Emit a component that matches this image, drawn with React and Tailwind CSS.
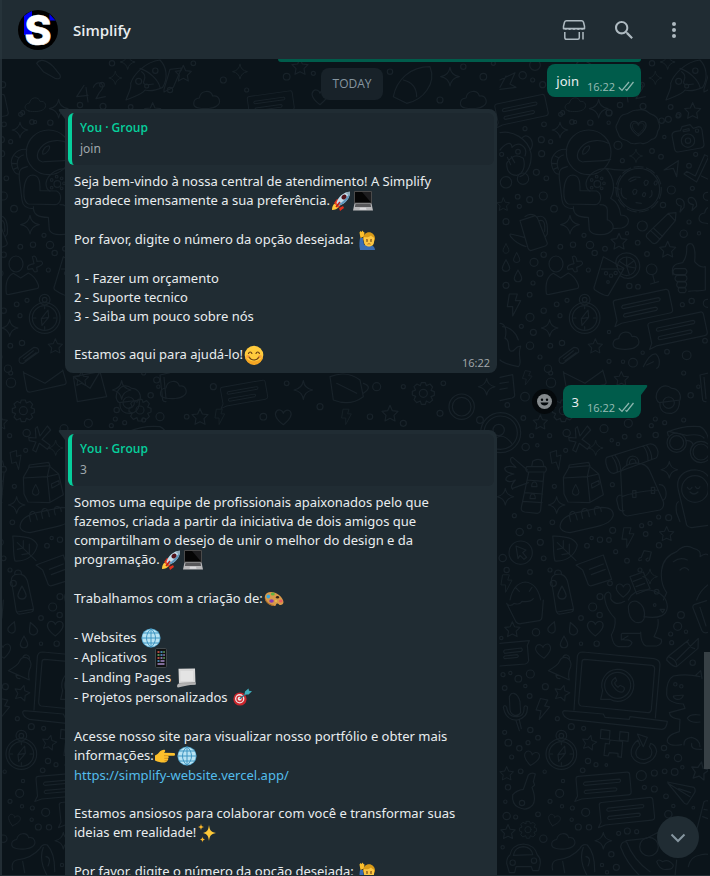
import React from "react";

/* ---------- Emoji drawings ---------- */

function Emoji({ label, children }) {
  return (
    <svg role="img" aria-label={label} viewBox="0 0 20 20" className="mx-px size-5 shrink-0">
      {children}
    </svg>
  );
}

const Rocket = () => (
  <Emoji label="rocket">
    <path d="M1 19c0-3 1-5.500 3-6.500l3.500 3.500c-1 2-3.500 3-6.500 3z" fill="#ffc83d" />
    <path d="M3 12l3-4 3 1-3 5zM8 17l4-2 1 2-4 3z" fill="#e0301e" />
    <path d="M4 13l2-3 4 4-3 3-1-2z" fill="#f4511e" />
    <path d="M5.500 12C7 6 12 1 19 .7 19.300 7 14 13 8 14.500z" fill="#c3dcea" />
    <path d="M7 13.500C12 11 16 7 19 .7 19.300 7 14 13 8 14.500z" fill="#5d94bb" />
    <path d="M14.500 1.800C16 1 17.500.7 19 .7c.1 1.500-.2 3-.8 4.300z" fill="#8fa8b8" />
    <ellipse cx="13" cy="6" rx="2.800" ry="2.200" transform="rotate(-40 13 6)" fill="#52121a" />
    <path d="M5 16l4-5" stroke="#b71c1c" strokeWidth="1.500" />
  </Emoji>
);

const Laptop = () => (
  <Emoji label="laptop">
    <rect x="1" y="0" width="18" height="13" rx="1" fill="#4a4a4a" />
    <rect x="2" y="1" width="16" height="10.500" fill="#050505" />
    <path d="M9 1h9v10.500z" fill="#1d1d1f" />
    <path d="M1.500 12.500h17L20 19.500H0z" fill="#b9b9bb" />
    <path d="M2.500 13h15l.7 3H1.800z" fill="#58585a" />
    <path d="M7 16.800h6l.5 2h-7z" fill="#dadadc" />
  </Emoji>
);

const RaisedHand = () => (
  <Emoji label="man raising hand">
    <path d="M2 20c-1-5-.5-9 0-12h3l1 7c6-1 11 0 11 5z" fill="#3a6db3" />
    <path d="M1.500 2.500l1-1.500 1 1 1-1.500 1 1.500 1 .5-.5 4-3.500 1.500z" fill="#fbbf2d" />
    <path d="M5 9c0-9 12-9 12 0l-1 3H6z" fill="#d89a18" />
    <path d="M6 7c3 1 6-.5 7-1.500 1 1.500 3 1.500 3 2.500v4c0 6-10 6-10 0z" fill="#fdc742" />
    <path d="M8 9.500l2 .3M12 9.800l2-.3" stroke="#8a5515" strokeWidth=".8" />
    <circle cx="9" cy="11" r=".8" fill="#4e2d10" />
    <circle cx="13" cy="11" r=".8" fill="#4e2d10" />
    <path d="M9.500 14.200c1-.6 2-.6 3 0" stroke="#a45b17" strokeWidth=".9" fill="none" />
  </Emoji>
);

const Smile = () => (
  <Emoji label="smiling face">
    <circle cx="10" cy="10" r="9.300" fill="#ffcb3d" />
    <path d="M1 11a9 9 0 0 0 18 0c-3 7-15 7-18 0z" fill="#f5a623" />
    <path d="M4.500 8.500c.8-2 2.700-2 3.400 0M12 8.500c.8-2 2.700-2 3.400 0M5 12c2.500 4 7.500 4 10 0" stroke="#6b3f13" strokeWidth="1.200" fill="none" strokeLinecap="round" />
    <circle cx="4" cy="11.500" r="1.800" fill="#f5803a" opacity=".5" />
    <circle cx="16" cy="11.500" r="1.800" fill="#f5803a" opacity=".5" />
  </Emoji>
);

const Palette = () => (
  <Emoji label="artist palette">
    <path d="M1 7C2 2 10 2 15 6c5 4 6 9 2 10-2 .5-2.500-2-4-1.500s-.5 3-3 2.500C4 16 0 12 1 7z" fill="#d99a4a" />
    <path d="M1 8c1 5 5 7.500 9 8l.5 1C4 16.500 0 12 1 8z" fill="#a66a28" />
    <ellipse cx="4.300" cy="7.500" rx="1.800" ry="2.100" fill="#39a6df" />
    <ellipse cx="8.800" cy="5" rx="2" ry="1.500" fill="#62b33f" />
    <ellipse cx="13.500" cy="8.300" rx="1.600" ry="1.300" fill="#352317" />
    <ellipse cx="16.800" cy="12" rx="1.800" ry="1.600" fill="#e9605c" />
    <ellipse cx="7.500" cy="12" rx="2.300" ry="1.700" fill="#893baf" />
    <ellipse cx="12" cy="12" rx="1" ry=".8" fill="#f1d04c" />
  </Emoji>
);

const Globe = () => (
  <Emoji label="globe">
    <circle cx="10" cy="10" r="9.600" fill="#4a9cc4" />
    <circle cx="10" cy="10" r="8.800" fill="#b8e3f3" />
    <path d="M10 .8v18.400M.8 10h18.400M2.600 5h14.800M2.600 15h14.800M10 .8c-6 5-6 13.400 0 18.400M10 .8c6 5 6 13.400 0 18.400" stroke="#3f96c2" strokeWidth="1" fill="none" />
  </Emoji>
);

const Phone = () => (
  <Emoji label="mobile phone">
    <rect x="4.500" y=".5" width="11" height="19" rx="1.200" fill="#101112" stroke="#4b5357" strokeWidth=".8" />
    <path d="M6.500 4h2M6.500 10h2" stroke="#e35d50" strokeWidth="1.300" />
    <path d="M9.500 4h2M9.500 7h2M6.500 13h2" stroke="#56a7db" strokeWidth="1.300" />
    <path d="M12.300 4h1.500M6.500 7h2M12.300 10h1.500" stroke="#6cba6a" strokeWidth="1.300" />
    <path d="M12.300 7h1.500M9.500 10h2M9.500 13h4M6.500 16h7" stroke="#a48cc8" strokeWidth="1.300" />
  </Emoji>
);

const Page = () => (
  <Emoji label="page with curl">
    <path d="M2.500.8L19 .5l.5 16-16.500.5z" fill="#d8d8d8" />
    <path d="M4.500 3h12.500v10H4.500z" fill="#e4e4e4" />
    <path d="M3 15.500l16.500-1 .2 2C15 16.500 8 18 2 19.500c-1.500-.5-1-3.500 1-4z" fill="#b3b3b3" />
    <path d="M3 15.500c6-1 10-.5 16-1" stroke="#8f8f8f" strokeWidth=".7" fill="none" />
  </Emoji>
);

const Target = () => (
  <Emoji label="bullseye">
    <circle cx="8" cy="11" r="6.600" fill="#c9252c" />
    <circle cx="7.700" cy="10.800" r="4.700" fill="#f0e4e4" />
    <circle cx="7.700" cy="10.800" r="3.400" fill="#cf2c33" />
    <circle cx="7.700" cy="10.800" r="2" fill="#f5eaea" />
    <path d="M7.700 10.800L15 5" stroke="#2c6e80" strokeWidth="1.300" />
    <path d="M12.500 6.500l.5-3L16.500.500l.5 2.300 3 .4-3.500 3.400z" fill="#40aebd" />
  </Emoji>
);

const Pointing = () => (
  <Emoji label="pointing right">
    <path d="M0 9.500c1-1 2.500-1 4-3s3.500-3 5.500-2.800c1.200.4.800 2-.5 3l10 .2c1.500.2 1.500 2.600 0 2.800H13c1 1 .8 2.300 0 2.700.5 1 .2 2-.7 2.400C12 17 6 17.500 0 14.500z" fill="#fcc02c" />
    <path d="M13 9.700H9M13 12.300H9.300M12.300 14.700H9.500" stroke="#c9851b" strokeWidth=".8" />
  </Emoji>
);

const Sparkles = () => (
  <Emoji label="sparkles">
    <path d="M12 2c.8 5.500 1.500 6.500 7 8-5.500 1.500-6.200 2.500-7 8-.8-5.500-1.500-6.500-6-8 4.500-1.500 5.200-2.500 6-8z" fill="#fdc838" />
    <path d="M4 .5c.3 2.500.7 3 3 3.500-2.300.5-2.700 1-3 3.500-.3-2.500-.7-3-3-3.500 2.300-.5 2.700-1 3-3.500zM5.500 13.500c.3 2 .6 2.400 2.500 3-1.900.5-2.200 1-2.500 3-.3-2-.6-2.500-2.500-3 1.900-.6 2.200-1 2.500-3z" fill="#f8b62a" />
  </Emoji>
);

/* ---------- Wallpaper doodles ---------- */

const at = (x, y, s = 1, r = 0) => `translate(${x} ${y}) rotate(${r}) scale(${s})`;
const Star = ({ x, y, s, r }) => (
  <path transform={at(x, y, s, r)} d="M0-24L7-8 24-6 12 6 15 23 0 15-15 23-12 6-24-6-7-8z" />
);
const Spark = ({ x, y, s, r }) => (
  <path transform={at(x, y, s, r)} d="M0-28Q3-4 28 0 4 4 0 28-4 4-28 0-4-4 0-28z" />
);
const Heart = ({ x, y, s, r }) => (
  <path transform={at(x, y, s, r)} d="M0 24C-24 6-28-8-20-17-12-24-2-18 0-10 2-18 14-24 21-16 28-6 20 8 0 24z" />
);
const Bolt = ({ x, y, s, r }) => (
  <path transform={at(x, y, s, r)} d="M-14-32L10-32 4-12 20-12-4 34-4 6-20 6z" />
);
const Drop = ({ x, y, s, r }) => (
  <path transform={at(x, y, s, r)} d="M0-18C6-6 12 2 11 9 8 20-8 20-11 9-12 2-6-6 0-18z" />
);
const Cloud = ({ x, y, s, r }) => (
  <path transform={at(x, y, s, r)} d="M-24 24C-46 20-42-4-22-6-18-30 12-32 18-12 38-16 46 8 30 18 20 26-6 28-24 24z" />
);
const Chat = ({ x, y, s, r }) => (
  <g transform={at(x, y, s, r)}>
    <path d="M-74-36H80Q88-36 88-28V26Q88 36 78 36H-70L-92 42-82 26V-28Q-82-36-74-36z" />
    <path d="M-56-16H54Q62-12 54-6H-56Q-64-10-56-16zM-56 10H40Q48 14 40 20H-56Q-64 16-56 10z" />
  </g>
);
const Compass = ({ x, y }) => (
  <g transform={at(x, y)}>
    <circle r="46" />
    <circle r="37" />
    <circle cy="-55" r="16" />
    <circle cy="-55" r="7" />
    <path d="M10-24L-10 2-8 22 12-2zM-10 2L12-2M-34 0h8M26 0h8M0 26v8M0-34v6" />
  </g>
);
const Cog = ({ x, y, s }) => (
  <g transform={at(x, y, s)}>
    <circle r="12" />
    <path d="M-6-32H6L9-23 20-28 28-19 23-9 33-5V6L23 10 28 20 19 28 9 23 6 33H-6L-9 23-20 28-28 19-23 9-33 5V-6L-23-10-28-20-19-28-9-23z" />
  </g>
);
const Dots = ({ points }) => points.map(([x, y, r]) => <circle key={`${x}-${y}`} cx={x} cy={y} r={r} />);

function Doodles() {
  return (
    <g id="doodles" fill="none" stroke="#182229" strokeWidth="3.600" strokeLinejoin="round" strokeLinecap="round">
      <g transform="translate(500 0) scale(.33333)">
        <path d="M0 240L45 218 30 252 48 262 0 268M18 228L0 262" />
        <Chat x={62} y={330} s={0.9} r={-12} />
        <Cloud x={226} y={314} s={0.8} />
        <Spark x={296} y={326} />
        <Spark x={466} y={234} s={0.7} />
        <Spark x={503} y={186} s={0.8} />
        <Star x={578} y={332} />
        <path d="M498 300C505 280 516 262 512 250 520 225 555 185 600 180 620 200 625 235 608 262 590 270 570 275 555 270 545 285 520 290 498 300zM540 205C570 215 595 240 600 262M545 215Q560 225 552 242T580 252" />
        <path d="M612 268L630 208 665 204 640 262 612 276z" />
        <path d="M372 256L350 290 384 286M378 262L384 306M400 262Q408 244 424 250 434 262 418 278L408 296 436 290" />
        <path d="M230 190C240 175 260 180 280 200L300 225Q305 240 285 235L250 215z" />
        <Dots points={[[68,226,11],[98,240,6],[128,254,9],[105,195,16],[188,338,6],[216,366,7],[327,339,9],[360,315,8],[429,319,9],[426,254,7],[456,190,8],[512,321,7],[536,244,9],[560,258,6],[586,212,8],[536,345,7],[485,362,8]]} />
      </g>
      <g transform="translate(500 100) scale(.33333)">
        <circle cx="266" cy="157" r="67" />
        <path d="M325 130C305 118 270 118 250 135 228 155 225 180 248 186 275 182 305 185 332 178M248 162C245 150 258 136 268 138 272 145 258 165 248 162z" />
        <path d="M200 148C165 145 150 175 155 195 158 215 170 225 178 222M190 165C170 170 168 195 175 208M165 168l12 6M156 190l13 1M160 208l12-5" />
        <path d="M202 200C180 205 176 210 178 235L186 300C188 318 200 326 220 326M192 290C190 260 195 226 218 225 240 226 240 250 240 272L290 273C308 282 305 312 285 314L205 312Q195 308 192 290z" />
        <path d="M220 320C220 345 235 352 265 352L268 390C275 408 325 410 338 388 345 372 325 358 322 360V330C322 318 310 314 300 314M320 208C345 235 345 270 332 295 350 305 360 325 362 345 395 345 390 380 365 384L340 386" />
        <circle cx="292" cy="252" r="10" />
        <path d="M325 208C300 200 262 220 258 250 258 265 262 270 270 274M318 205Q350 212 385 210M345 262L358 268" />
        <circle cx="416" cy="268" r="63" />
        <circle cx="416" cy="268" r="68" strokeDasharray="28 10" />
        <path d="M386 240C396 230 405 230 420 232M390 245l18-8M432 248q4-12 13-4-2 14-10 12zM398 275q4-12 13-4-2 14-10 12zM427 285q4-12 10-4-2 12-8 8zM462 250q4-12 10-4-2 12-8 8zM364 265q-4 28 16 32M455 272q4 16-6 20M408 308l16 2" />
        <Dots points={[[275,240,4],[290,230,4],[305,235,4],[312,250,4],[305,265,4],[275,263,4]]} />
        <path d="M352 70C340 85 355 95 356 105 362 122 378 118 384 124 400 140 415 125 425 130 440 136 450 120 455 118 475 115 470 98 474 92 486 78 474 70 474 60 468 42 452 45 446 38 430 22 415 32 410 30 392 30 385 42 378 42 358 44 358 60 352 70z" />
        <Heart x={415} y={84} />
        <Heart x={415} y={84} s={0.75} />
        <path d="M524 95L541 92 546 80 570 74 580 85 596 80Q604 80 606 90L612 134Q612 142 602 144L534 156Q526 156 524 148L516 106Q516 98 524 95zM549 90l18-4 1 6-18 3z" />
        <circle cx="564" cy="122" r="20" />
        <circle cx="564" cy="122" r="8" />
        <circle cx="591" cy="92" r="5" />
        <path d="M492 210L535 182 530 230 520 205zM552 222L590 246 626 170 614 164 586 228 560 214zM604 228L630 240" />
        <path d="M0 98C35 90 85 115 93 160 96 190 85 220 60 230M68 112C80 100 98 115 97 135 95 148 90 150 88 150M0 150C25 120 35 130 36 142 55 120 85 140 75 168M20 190C20 215 30 226 50 226 68 222 78 200 70 175Q40 155 20 190zM22 172l10 22M34 170l10 18" />
        <circle cx="54" cy="155" r="7" />
        <circle cx="5" cy="163" r="6" />
        <circle cx="18" cy="247" r="17" />
        <circle cx="69" cy="236" r="17" />
        <path d="M60 362L106 347Q112 350 115 360L142 430Q142 436 136 438L92 452Q86 450 84 444zM75 350Q88 338 104 346M72 412L58 408 32 402Q28 402 32 410 50 432 78 440M110 352C130 342 145 355 142 402L136 410M118 362C130 358 136 366 134 394" />
        <path d="M445 398L505 340 528 338 526 362 472 426Q465 434 456 428L440 412Q436 404 445 398zM452 392l28 26M460 384l28 26M505 340l20 22" />
        <path d="M310 470L372 505 325 586Q315 590 285 570 280 565 283 560zM304 507H370M350 500C340 470 365 455 390 460 420 470 428 505 408 525 395 538 375 538 362 528" />
        <circle cx="380" cy="499" r="28" />
        <path d="M380 499V472M380 499L402 482M380 499L406 504M380 499L388 524M380 499L358 484" />
        <Dots points={[[318,520,5],[333,527,5],[347,519,5],[324,546,4]]} />
        <ellipse cx="168" cy="492" rx="21" ry="24" />
        <path d="M160 520C140 530 136 555 139 580Q140 585 148 583L230 566Q238 564 235 555 225 528 205 519L182 534z" />
        <path d="M217 470q12-6 14 14l12-1q12 8-5 16l-8 3 2 12q-10 6-14-8l-14 2q-6-10 9-15l9-2z" />
        <circle cx="455" cy="508" r="16" />
        <path d="M458 524L464 548M452 552L476 545" />
        <path d="M519 525Q512 500 530 492L548 488Q562 470 560 440 564 428 576 432 588 445 584 485 600 505 616 500V570C600 575 580 570 566 574M526 506h30q10 8 0 18h-32q-10-8 0-18zM528 526h28q10 8 0 18h-26q-10-8 0-18zM532 546h24q8 6 0 16h-22q-8-6 0-16zM536 564h20q6 8-2 14h-14q-8-6-4-14z" />
        <Compass x={254} y={654} />
        <Chat x={426} y={620} r={-12} />
        <Chat x={530} y={688} r={-12} />
        <Cloud x={378} y={722} />
        <path d="M178 775L222 742Q238 742 236 756L190 790Q174 792 178 775zM190 776L220 752M195 782L228 758" />
        <path d="M0 670C15 670 22 690 15 715 32 720 20 740 30 752 45 760 40 740 62 738 50 770 70 790 55 800 30 795 10 790 0 780M8 680C30 680 50 700 55 720" />
        <path d="M430 800C440 780 455 760 468 762 482 775 480 800 470 805M440 795l20-10" />
        <path d="M530 310Q525 295 540 296 556 300 552 322L540 336 544 318Q534 318 530 310zM565 305Q562 292 576 292 590 298 590 318L576 332 580 314Q570 314 565 305z" />
        <Spark x={180} y={90} s={0.85} />
        <Spark x={408} y={168} s={0.7} />
        <Spark x={210} y={374} />
        <Spark x={149} y={684} s={0.9} />
        <Star x={10} y={313} s={0.8} />
        <Star x={357} y={424} />
        <Star x={503} y={448} />
        <Star x={286} y={738} s={0.9} />
        <Bolt x={42} y={614} />
        <Drop x={18} y={446} s={0.8} />
        <Drop x={18} y={497} />
        <Drop x={50} y={473} s={0.85} />
        <Drop x={54} y={528} />
        <Cloud x={636} y={345} />
        <Dots points={[[75,86,6],[124,119,9],[152,125,6],[125,161,9],[132,73,7],[182,43,6],[225,66,5],[271,68,8],[327,38,9],[326,68,5],[109,217,9],[139,235,7],[354,136,12],[367,182,6],[456,153,7],[483,170,7],[493,111,5],[505,58,9],[534,48,6],[587,163,6],[567,197,7],[514,270,12],[577,265,6],[622,289,12],[489,315,8],[53,290,7],[89,299,9],[58,319,6],[130,288,12],[162,326,10],[18,365,9],[252,406,6],[427,378,15],[381,400,5],[413,428,7],[551,401,11],[597,400,5],[567,366,6],[181,440,7],[219,434,8],[270,435,11],[315,446,7],[284,459,8],[441,462,7],[131,464,8],[102,487,12],[120,520,9],[99,549,6],[18,556,9],[89,584,7],[265,510,6],[388,558,8],[414,560,7],[170,613,7],[201,601,6],[131,632,8],[180,647,6],[90,652,12],[64,679,6],[100,697,9],[90,737,11],[151,737,7],[186,729,8],[120,771,6],[575,603,8],[547,614,6],[622,610,12],[327,696,5],[428,758,5],[501,755,7],[560,766,13],[399,788,13],[369,785,5],[327,784,6],[615,722,7],[144,806,11]]} />
      </g>
      <g transform="translate(500 370) scale(.33333)">
        <path d="M0 22L38 14 44 76Q44 82 36 84L0 92M0 40L26 36M0 58L22 54" />
        <Bolt x={82} y={24} s={0.65} r={10} />
        <path d="M190 5L200 60Q202 68 212 66L312 44Q320 42 318 34L308 0M192 8L255 40 308 2" />
        <Star x={364} y={26} s={0.9} />
        <path d="M470 70C480 45 500 42 515 55 535 55 545 75 540 90L478 98Q465 90 470 70zM480 98C478 125 495 132 515 130 535 125 540 105 538 92" />
        <circle cx="506" cy="98" r="17" />
        <path d="M600 15L630 8M600 15L608 90Q610 96 618 95M612 22L618 86" />
        <circle cx="2" cy="188" r="60" />
        <circle cx="2" cy="188" r="50" />
        <circle cx="-4" cy="180" r="17" />
        <path d="M-30 225Q0 175 35 220" />
        <Star x={121} y={156} s={0.9} />
        <Cog x={190} y={122} />
        <path d="M232 170L240 198 262 168 272 180 246 208 270 226 262 238 238 220 228 246 218 240 228 216 208 212 206 202 228 204 226 176z" />
        <Spark x={287} y={234} s={0.8} />
        <Bolt x={170} y={270} s={0.85} r={-18} />
        <circle cx="530" cy="218" r="29" />
        <circle cx="530" cy="218" r="21" />
        <circle cx="603" cy="246" r="32" />
        <circle cx="603" cy="246" r="24" />
        <path d="M558 212Q575 210 580 225M505 198L502 186Q550 165 600 170 618 178 625 205M505 184L560 196Q600 190 612 204" />
        <path d="M85 338L36 356M82 300L38 262Q28 262 34 278L48 292Q20 285 14 295 16 308 42 312 15 318 18 330 28 340 46 330 28 350 38 358" />
        <path d="M95 290L98 274Q115 262 128 274L132 290M80 290H136Q142 298 136 306H82Q74 298 80 290zM86 308L64 412Q62 424 74 426L112 430Q120 430 122 420L132 308M82 330L130 334M74 368L128 372M68 394L126 398M95 350q0-14 8-14t8 14zM90 386q0-14 8-14t8 14z" />
        <path d="M208 285L266 277 270 287 206 292zM206 294L190 322 192 372 204 396 268 398 310 374 296 312 270 290M190 324L262 320 270 396M262 320L296 312M262 320L268 292M274 342l22-10 2 10-22 12z" />
        <Drop x={227} y={360} s={0.9} />
        <path d="M320 262L448 222Q468 220 474 245 474 260 468 264L342 310Q325 312 318 280 316 266 320 262zM335 258Q352 280 352 305M345 256Q362 276 362 302M430 228Q445 248 444 272M440 226Q456 246 455 268" />
        <path d="M362 305Q370 285 400 280 435 275 448 300L490 395Q494 412 480 420L382 438Q370 436 368 425zM366 380Q400 365 475 360M380 285Q380 260 398 258 418 260 416 282M388 283Q388 268 398 267 408 268 408 280M398 362h10v20h-10zM454 352h10v18h-10zM364 375Q350 375 350 390L356 415Q360 425 372 422M478 344Q494 342 498 365 500 385 490 390" />
        <Spark x={508} y={299} s={0.9} />
        <Spark x={170} y={405} s={0.9} />
        <Spark x={16} y={380} s={0.9} />
        <path d="M535 360C525 320 555 298 590 300 630 305 640 340 632 370M535 360L560 465Q566 475 580 472L630 465M535 395Q525 400 530 430L540 455M562 352q8 12 14 0M586 350q8 12 14 0M570 366q12 12 24 0" />
        <circle cx="585" cy="357" r="40" />
        <path d="M180 470Q182 440 230 428L305 412Q340 412 340 435 335 460 290 470L210 488Q182 486 180 470zM212 455Q204 430 215 425T232 450M248 445Q240 420 252 416T268 440M286 435Q278 412 290 410T304 424" />
        <path d="M158 498C190 500 222 500 232 525 228 550 205 575 165 573 158 550 162 520 158 498zM172 518L228 572M190 512V534L172 538M208 522V550L186 554" />
        <circle cx="62" cy="548" r="35" />
        <path d="M48 528L78 540 68 548 80 562 72 568 60 556 54 566z" />
        <Bolt x={384} y={502} s={0.9} />
        <Star x={500} y={491} s={0.9} />
        <path d="M425 570Q412 576 418 564L424 562 432 542 454 546 448 570Q440 578 438 568L444 564" />
        <path d="M485 600Q490 560 530 545 555 520 580 535 605 540 600 560 620 545 630 560M520 575Q540 560 562 570" />
        <path d="M485 600Q480 640 500 668L490 690M630 640Q600 660 590 690M540 600q14-14 26 0" />
        <path d="M390 620l40-14 20 50-40 16zM400 634l26-10M408 650l26-10" />
        <Heart x={370} y={660} s={0.9} />
        <Spark x={450} y={620} s={0.8} />
        <Bolt x={20} y={640} s={0.8} />
        <path d="M30 690Q40 640 76 636 112 640 122 690M48 654l10 10M96 652l-8 12" />
        <Dots points={[[20,600,8],[90,606,7],[160,640,9],[300,680,9],[330,640,7],[420,600,6],[470,665,7],[150,600,6]]} />
        <Dots points={[[153,38,14],[75,80,13],[22,105,7],[152,9,6],[70,144,7],[95,197,6],[149,197,6],[77,231,11],[112,226,5],[200,189,11],[312,176,12],[374,200,7],[417,197,6],[335,211,5],[354,222,5],[454,167,6],[466,147,6],[494,158,6],[467,195,8],[551,9,6],[595,50,5],[551,150,6],[572,76,8],[197,241,6],[163,349,6],[337,344,6],[43,437,6],[88,470,6],[59,486,11],[157,457,7],[118,477,5],[121,517,9],[131,565,7],[261,527,7],[275,504,5],[300,509,8],[327,510,7],[338,481,9],[347,545,6],[476,441,6],[506,443,9],[450,460,6],[425,467,6],[437,492,7],[477,526,8],[381,572,7],[8,564,11],[385,160,12]]} />
      </g>
      <g transform="translate(540 370) scale(.33333)">
        <path d="M44 612Q44 600 55 600 66 602 64 614M44 614L64 612M42 616Q30 622 36 642L48 720Q50 734 62 732L94 726Q102 724 100 714L84 640Q80 620 66 614M52 726L98 718" />
        <Drop x={66} y={668} s={1.1} />
        <path d="M108 585L190 555L215 628L158 646Q150 650 145 644L128 600zM148 598L190 582M154 614L196 598" />
      </g>
      <g transform="translate(500 600) scale(.33333)">
        <path d="M20 10L48 66Q56 74 66 70L118 62Q126 58 126 50L130 0M22 14Q35 20 42 10 60 16 66 4 90 8 100-4" />
        <path d="M315 0Q320 30 345 55 348 80 334 105 340 140 355 140H378Q390 142 396 128 390 118 376 120L364 118M366 100H420M364 102V120L384 108M385 20Q390 0 410 4 440 20 432 56 425 72 405 66 385 55 385 20zM432 50Q500 60 502 20 500-20 450-30 400-34 385 0M474 58Q478 80 462 110L484 118Q488 132 470 138H438Q422 130 422 96M315 0Q310-20 325-24 335-20 332-4 345 20 374 4M480 28h14l-6 10z" />
        <circle cx="464" cy="15" r="4" />
        <path d="M582 14L620 2M582 14Q576 18 580 26L606 92Q610 100 620 98L630 96M600 22L618 78" />
        <Star x={37} y={88} s={0.95} />
        <Drop x={157} y={82} r={20} />
        <Drop x={218} y={86} r={-20} s={1.1} />
        <Drop x={192} y={126} />
        <Heart x={286} y={84} />
        <Heart x={130} y={152} r={-5} s={0.95} />
        <path d="M0 130L88 122 82 136 86 182Q84 190 76 192L0 198M14 150L64 144Q70 150 64 154L14 160Q8 154 14 150zM14 168L52 164Q58 168 52 172L14 176Q8 172 14 168z" />
        <path d="M145 212Q175 195 178 185 185 168 202 174 216 182 212 200 202 220 208 240zM188 174Q190 164 200 165 210 168 208 178M168 224Q168 236 180 236" />
        <Star x={186} y={278} s={0.95} r={15} />
        <path d="M222 330L232 170Q234 156 248 156L462 176Q480 180 480 194L466 354M236 305L246 186Q246 178 254 178L456 196Q464 198 464 206L454 330Q452 338 444 338L244 318Q236 316 236 305zM192 332L310 342 315 352 388 358 390 350 502 364Q500 386 486 388L208 358Q188 350 188 336z" />
        <circle cx="353" cy="256" r="39" />
        <path d="M308 272A48 48 0 1 1 330 298L302 298z" />
        <path d="M338 240Q330 250 342 262 354 278 368 276 376 268 372 262L360 256 354 262Q344 254 344 248L350 242 346 232z" />
        <path d="M530 180L595 115 594 145 530 200Q520 202 500 180 500 174 506 168L566 120M562 124Q568 142 584 146M506 170Q530 180 530 196" />
        <path d="M600 230Q560 220 520 228 498 240 500 285 505 310 550 312L555 325Q530 332 508 338 510 355 540 358L538 395Q500 405 502 425 510 440 545 434M520 288Q540 285 550 286 545 300 530 298 520 295 520 288zM600 345Q570 340 562 355 570 370 600 366M552 435Q550 415 575 412 600 418 600 440M575 430Q570 450 605 448M588 225L602 212 606 235" />
        <circle cx="526" cy="253" r="5" />
        <circle cx="544" cy="259" r="5" />
        <path d="M28 290Q32 278 42 280 55 284 60 305L62 338Q56 348 44 346 32 342 30 330zM10 322Q18 362 52 360 85 352 82 320 75 314 72 322 74 348 52 350 24 352 20 322 14 312 10 322zM48 362L58 392M58 360L64 386" />
        <Bolt x={128} y={328} r={12} s={0.95} />
        <Compass x={184} y={462} />
        <Star x={268} y={427} s={0.9} r={12} />
        <path d="M303 388L330 392 328 418 301 415zM360 395L386 398 384 424 358 420zM330 420L368 424 364 472 354 470 354 460 328 458 324 468 312 466 316 430 328 432z" />
        <path d="M412 402L442 412 430 440 412 402zM414 420Q388 440 395 468 408 492 435 490 465 482 470 455 468 435 452 430L448 440Q462 455 450 472 430 486 412 472 400 455 420 436z" />
        <Heart x={95} y={474} r={10} s={0.95} />
        <Star x={20} y={520} s={0.85} />
        <Star x={600} y={512} s={1.1} r={10} />
        <Chat x={308} y={557} s={0.95} r={-5} />
        <Chat x={378} y={634} s={0.95} r={-6} />
        <path d="M85 525Q95 515 106 522L100 545 104 555 96 562 100 574Q108 600 98 615 80 635 55 622 35 612 38 585 50 570 70 568z" />
        <circle cx="66" cy="609" r="8" />
        <path d="M502 546L582 562Q588 568 584 578L562 612Q555 614 550 606L504 550 570 590M536 566l36 12" />
        <Heart x={162} y={660} s={0.75} r={15} />
        <Star x={24} y={695} s={0.9} />
        <Cog x={84} y={689} s={0.78} />
        <Cloud x={190} y={724} s={0.9} />
        <Spark x={310} y={722} s={0.9} />
        <path d="M30 765Q35 735 70 732 105 735 112 765 124 775 120 795L116 812H98L94 800H48L44 818H28L20 790Q20 772 30 765zM40 766Q44 742 70 740 95 742 98 764z" />
        <circle cx="38" cy="788" r="8" />
        <circle cx="102" cy="782" r="8" />
        <path d="M158 810Q152 785 170 780 215 775 240 745 248 730 262 735 285 760 284 815M188 784L194 818M250 742Q235 780 262 828M258 770Q275 772 264 798" />
        <path d="M362 740Q365 722 380 726 400 780 450 815M378 722L440 715 478 695M362 742Q380 790 420 828M470 785Q475 775 488 785 505 775 520 795 520 810 500 808 480 812 470 785zM530 780L525 828M565 800Q570 770 600 765 620 760 630 765" />
        <circle cx="447" cy="740" r="28" />
        <path d="M590 690L612 605Q618 600 630 604M608 650L624 656M612 628L622 630" />
        <Dots points={[[243,54,7],[278,21,12],[299,45,8],[243,131,5],[290,131,8],[108,97,11],[4,114,5],[543,45,10],[533,79,12],[512,102,6],[558,95,5],[515,128,6],[578,188,8],[9,224,6],[31,219,5],[55,236,10],[91,222,12],[76,258,5],[14,264,7],[136,260,9],[89,288,7],[172,356,6],[214,380,9],[251,385,6],[14,397,6],[91,390,8],[25,428,10],[84,428,6],[58,445,8],[35,471,6],[114,413,7],[264,483,8],[288,494,6],[319,495,4],[134,515,5],[62,514,7],[248,511,7],[424,527,15],[463,519,9],[494,514,7],[524,516,10],[492,444,8],[534,474,11],[502,469,5],[547,502,5],[24,562,8],[16,605,5],[189,543,5],[179,580,12],[150,604,6],[433,562,6],[463,567,9],[498,589,7],[186,619,5],[217,624,6],[257,637,12],[20,648,11],[47,651,6],[114,643,7],[215,659,5],[235,681,9],[267,682,8],[130,716,11],[356,700,6],[382,693,9],[410,695,6],[505,643,11],[580,623,4],[520,618,5],[334,763,8],[306,795,5],[349,802,9],[321,817,5],[8,742,5]]} />
      </g>
      <g transform="scale(.33333)">
        <Star x={550} y={220} />
        <Cloud x={620} y={300} />
        <Spark x={720} y={215} s={0.8} />
        <Chat x={810} y={310} s={0.8} r={-8} />
        <Star x={900} y={200} />
        <Heart x={960} y={290} />
        <path d="M1180 290C1190 240 1230 200 1290 200 1310 250 1270 300 1220 310zM1210 240Q1250 250 1250 290" />
        <Spark x={1350} y={230} />
        <Cloud x={1420} y={300} />
        <path d="M220 1130L300 1115 320 1190 232 1205zM220 1130L270 1165 300 1115" />
        <Cog x={420} y={1230} />
        <Spark x={365} y={1170} />
        <Cloud x={520} y={1170} />
        <Star x={600} y={1250} />
        <Chat x={730} y={1180} s={0.8} r={-10} />
        <Heart x={850} y={1250} />
        <Spark x={910} y={1170} />
        <path d="M990 1130q50-20 90 10l10 50q-40 30-90 10zM1010 1150l60 30M1090 1150q30 10 0 30" />
        <Star x={1170} y={1240} />
        <Cog x={1270} y={1180} />
        <circle cx="1385" cy="1220" r="38" />
        <circle cx="1385" cy="1220" r="28" />
        <Spark x={1460} y={1160} s={0.9} />
        <Bolt x={660} y={1250} s={0.7} />
        <Bolt x={1040} y={1250} s={0.7} />
        <Dots points={[[510,270,8],[580,190,7],[670,240,9],[740,270,6],[860,230,10],[940,220,6],[1320,300,9],[1390,200,8],[1450,230,10],[1480,190,6],[1170,215,8],[350,1230,8],[470,1140,9],[480,1250,12],[560,1250,7],[640,1160,9],[790,1250,10],[860,1150,7],[960,1220,9],[1110,1250,8],[1130,1160,12],[1210,1160,6],[1210,1270,9],[1320,1240,9],[1330,1150,7],[1440,1260,10]]} />
      </g>
    </g>
  );
}

function Wallpaper() {
  return (
    <svg aria-hidden="true" className="absolute inset-y-0 -left-[2px] h-full w-full">
      <g transform="translate(0 -59)">
        <Doodles />
        <use href="#doodles" x="-540" />
      </g>
    </svg>
  );
}

/* ---------- Messages ---------- */

function Line({ text, icons, children }) {
  return (
    <div className={`flex items-start whitespace-pre ${icons ? "h-5" : "h-[19px]"}`}>
      {text && <span>{text}</span>}
      {children}
      {icons}
    </div>
  );
}

function Ticks() {
  return (
    <svg role="img" aria-label="Delivered" viewBox="0 0 16 11" className="h-[11px] w-4 text-white/55" fill="none" stroke="currentColor" strokeWidth="1.300">
      <path d="M.8 6.200L4 9.400 11 1M7.500 8.200L8.800 9.400 15.500 1" />
    </svg>
  );
}

function Sent({ text, tail }) {
  return (
    <div className={`relative flex h-[33px] items-center gap-2 rounded-lg bg-[#005c4b] pr-[7px] pl-[9px] ${tail ? "rounded-tr-none" : ""}`}>
      {tail && (
        <svg aria-hidden="true" viewBox="0 0 8 13" className="absolute top-0 -right-[7px] h-[13px] w-2" fill="#005c4b">
          <path d="M0 0H6.500Q8 .5 7 2L1 10V13H0z" />
        </svg>
      )}
      <span className="font-['Noto_Sans',sans-serif] leading-5">{text}</span>
      <span className="flex items-center gap-[3px] pt-3 text-[11px] leading-4 text-white/60">
        16:22
        <Ticks />
      </span>
    </div>
  );
}

function Received({ quote, time, children }) {
  return (
    <article className="relative w-3/4 rounded-lg rounded-tl-none bg-[#202c33] px-[3px] pt-1 pb-2">
      <svg aria-hidden="true" viewBox="0 0 8 13" className="absolute top-0 -left-[7px] h-[13px] w-2" fill="#202c33">
        <path d="M8 0H1.500Q0 .5 1 2L7 10V13H8z" />
      </svg>
      <blockquote className="h-[52px] rounded-md border-l-4 border-[#06cf9c] bg-[#1d282f] pt-1 pl-2 text-[12px] leading-[21px]">
        <p className="font-semibold text-[#06cf9c]">You · Group</p>
        <p className="font-['Noto_Sans',sans-serif] text-[#a0a8ad]">{quote}</p>
      </blockquote>
      <div className="mt-[7px] flex items-end justify-between pr-1 pl-[6px]">
        <div className="min-w-0 font-['Noto_Sans',sans-serif]">{children}</div>
        {time && <time className="-mb-2 text-[11px] leading-5 text-white/60">{time}</time>}
      </div>
    </article>
  );
}

export default function App() {
  return (
    <div className="relative flex h-screen flex-col overflow-hidden bg-[#0b141a] font-['Open_Sans','Noto_Sans',sans-serif] text-[13px] leading-[19px] text-[#e9edef]">
      <header className="z-10 flex h-[59px] shrink-0 items-center border-l-2 border-[#26333a] bg-[#202c33] pr-6 pl-4">
        <svg role="img" aria-label="Simplify logo" viewBox="0 0 40 40" className="size-10 overflow-visible">
          <circle cx="20" cy="20" r="20" fill="#000" />
          <path d="M6 6Q10 2.500 14 1V25H6z" fill="#0000f5" />
          <path d="M31.500 4L37.500 10.500h-6z" fill="#0000f5" />
          <text x="20" y="35" textAnchor="middle" fontFamily="Inter" fontWeight="800" fontSize="41" fill="#fff" stroke="#fff" strokeWidth=".6">S</text>
        </svg>
        <h1 className="ml-[15px] flex-1 text-[15px] leading-6 font-semibold">Simplify</h1>
        <nav className="flex gap-[26px] text-[#aebac1]">
          <button type="button" aria-label="Catalog" className="size-6">
            <svg viewBox="0 0 24 24" className="size-6" fill="none" stroke="currentColor" strokeWidth="1.500">
              <path d="M4.500 2.800h15q1.500 0 2 1.500l1 4v2.500h-21V8.300l1-4q.5-1.500 2-1.500z" strokeLinejoin="round" />
              <path d="M1.500 9.800q2 3.500 4 .8 2.200 2.700 4.400 0 2.100 2.700 4.200 0 2.200 2.700 4.400 0 2 2.700 4-.8" fill="currentColor" stroke="none" />
              <path d="M2.800 14v5.500q0 1.800 1.800 1.800h11.200q1.500 0 1.500-1.500V14M21 14v7.500" />
            </svg>
          </button>
          <button type="button" aria-label="Search" className="size-6">
            <svg viewBox="0 0 24 24" className="size-6" fill="currentColor">
              <path d="M15.900 14.300H15l-.3-.3c1-1.100 1.600-2.700 1.600-4.300 0-3.700-3-6.700-6.700-6.700S3 6 3 9.700s3 6.700 6.700 6.700c1.600 0 3.200-.6 4.300-1.600l.3.3v.8l5.100 5.100 1.500-1.500-5-5.200zm-6.200 0c-2.600 0-4.600-2.100-4.600-4.600s2.100-4.600 4.600-4.600 4.600 2.100 4.600 4.600-2 4.600-4.600 4.600z" />
            </svg>
          </button>
          <button type="button" aria-label="Menu" className="size-6">
            <svg viewBox="0 0 24 24" className="size-6" fill="currentColor">
              <circle cx="12" cy="6" r="2" />
              <circle cx="12" cy="12" r="2" />
              <circle cx="12" cy="18" r="2" />
            </svg>
          </button>
        </nav>
      </header>

      <main className="relative min-h-0 flex-1 overflow-hidden border-b border-l-2 border-[#222d34]">
        <Wallpaper />
        <div className="absolute inset-x-0 top-[9px] z-10 mr-2 flex justify-center">
          <span className="rounded-lg bg-[#182229] px-3 py-[6px] text-[12px] leading-[20px] text-[#8696a0]">TODAY</span>
        </div>

        <div className="relative mr-[6px] flex flex-col gap-3 px-[63px]">
          <div className="flex flex-col items-end gap-[2px]">
            <div className="h-[3px] w-[63%] rounded-b-lg bg-[#005c4b]" />
            <Sent text="join" />
          </div>

          <Received quote="join" time="16:22">
            <Line text="Seja bem-vindo à nossa central de atendimento! A Simplify" />
            <Line text="agradece imensamente a sua preferência." icons={<><Rocket /><Laptop /></>} />
            <Line />
            <Line text="Por favor, digite o número da opção desejada: " icons={<RaisedHand />} />
            <Line />
            <Line text="1 - Fazer um orçamento" />
            <Line text="2 - Suporte tecnico" />
            <Line text="3 - Saiba um pouco sobre nós" />
            <Line />
            <Line text="Estamos aqui para ajudá-lo!" icons={<Smile />} />
          </Received>

          <div className="flex items-center justify-end gap-[6px]">
            <button type="button" aria-label="React" className="flex size-[25px] items-center justify-center rounded-full bg-[#05090c]">
              <svg viewBox="0 0 15 15" className="size-[15px]">
                <circle cx="7.500" cy="7.500" r="7.500" fill="#858a8d" />
                <circle cx="5" cy="5.800" r="1.200" fill="#05090c" />
                <circle cx="10" cy="5.800" r="1.200" fill="#05090c" />
                <path d="M3.500 8.500h8c-.8 4-7.200 4-8 0z" fill="#05090c" />
              </svg>
            </button>
            <Sent text="3" tail />
          </div>

          <Received quote="3">
            <Line text="Somos uma equipe de profissionais apaixonados pelo que" />
            <Line text="fazemos, criada a partir da iniciativa de dois amigos que" />
            <Line text="compartilham o desejo de unir o melhor do design e da" />
            <Line text="programação." icons={<><Rocket /><Laptop /></>} />
            <Line />
            <Line text="Trabalhamos com a criação de:" icons={<Palette />} />
            <Line />
            <Line text="- Websites " icons={<Globe />} />
            <Line text="- Aplicativos " icons={<Phone />} />
            <Line text="- Landing Pages " icons={<Page />} />
            <Line text="- Projetos personalizados " icons={<Target />} />
            <Line />
            <Line text="Acesse nosso site para visualizar nosso portfólio e obter mais" />
            <Line text="informações:" icons={<><Pointing /><Globe /></>} />
            <Line>
              <a href="https://simplify-website.vercel.app/" className="text-[#53bdeb]">https://simplify-website.vercel.app/</a>
            </Line>
            <Line />
            <Line text="Estamos ansiosos para colaborar com você e transformar suas" />
            <Line text="ideias em realidade!" icons={<Sparkles />} />
            <Line />
            <Line text="Por favor, digite o número da opção desejada: " icons={<RaisedHand />} />
          </Received>
        </div>

        <div aria-hidden="true" className="absolute top-[593px] right-0 h-[117px] w-[6px] bg-[#374045]" />
        <button type="button" aria-label="Scroll to bottom" className="absolute right-[11px] bottom-[17px] flex size-[42px] items-center justify-center rounded-full bg-[#202c33] text-[#8696a0]">
          <svg viewBox="0 0 20 20" className="size-5" fill="none" stroke="currentColor" strokeWidth="2">
            <path d="M3.500 7.500L10 14l6.500-6.500" />
          </svg>
        </button>
      </main>
    </div>
  );
}
